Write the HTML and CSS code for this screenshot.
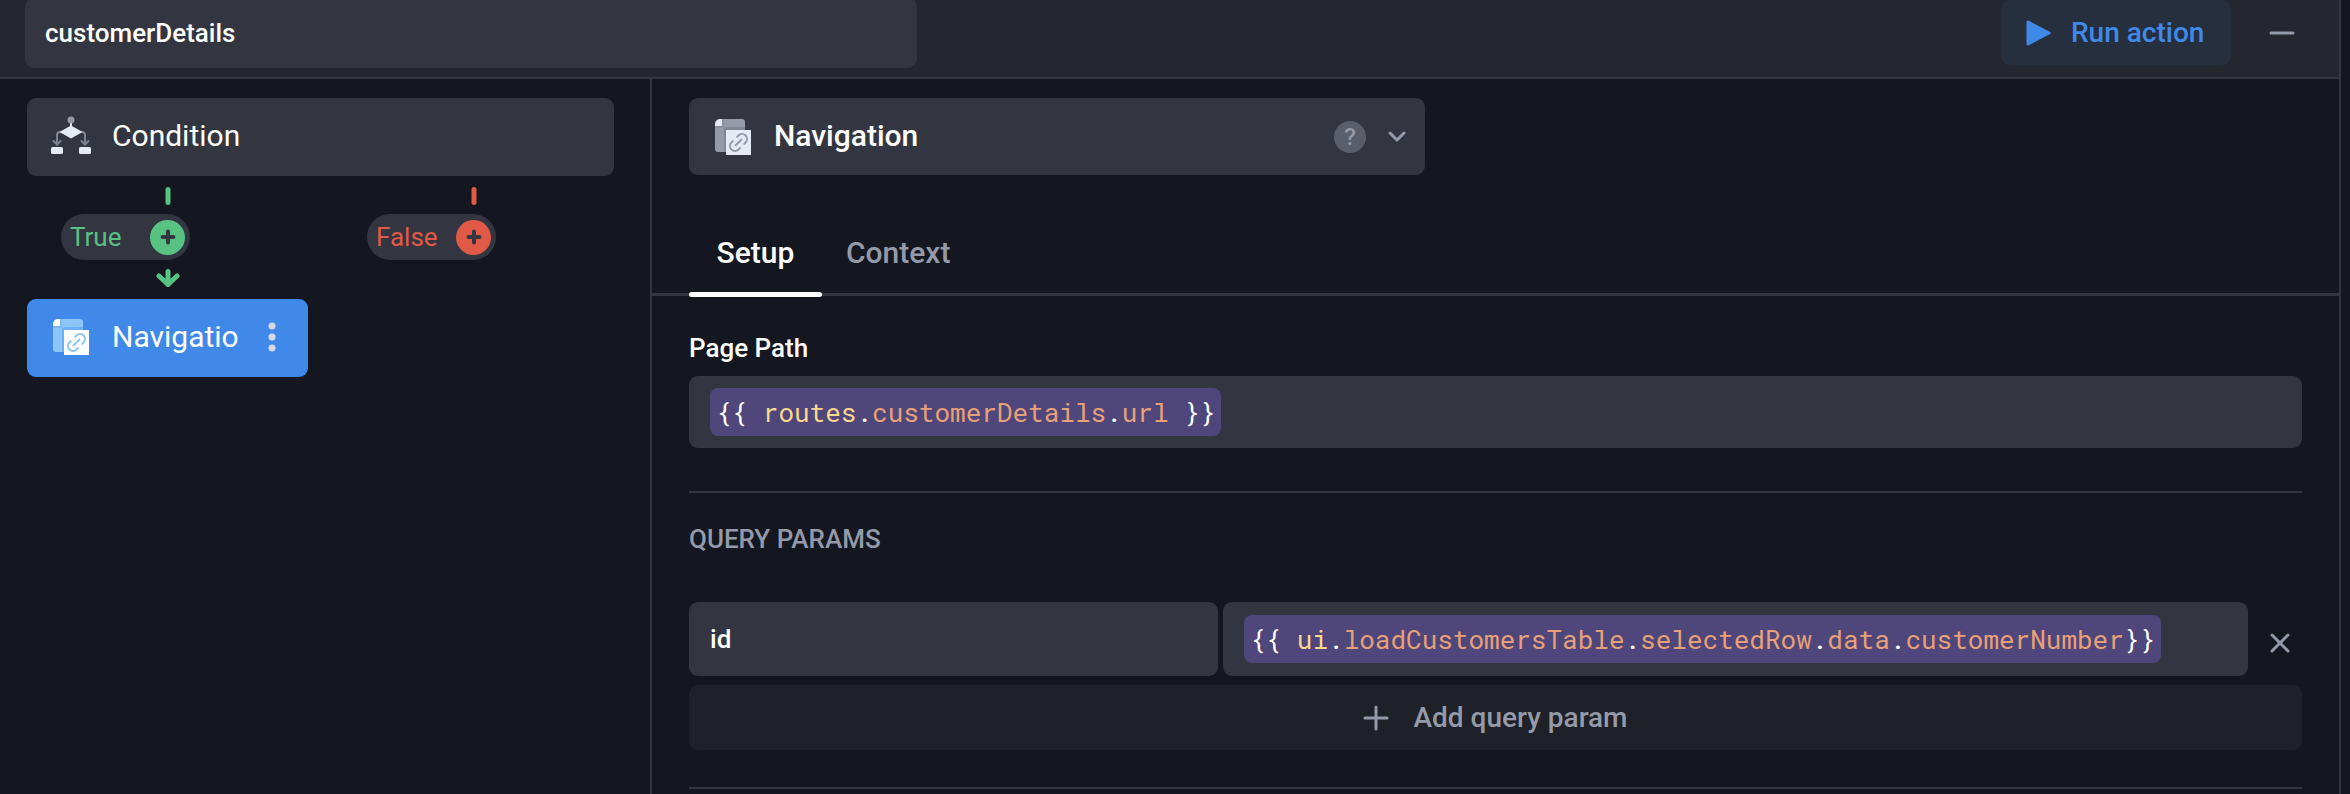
FILE: index.html
```html
<!DOCTYPE html>
<html lang="en">
<head>
<meta charset="utf-8">
<title>customerDetails</title>
<link rel="stylesheet" href="styles.css">
</head>
<body>
<svg class="sprite" aria-hidden="true">
  <symbol id="page-link" viewBox="0 0 36 36">
    <path class="sheet" d="M7 0H27a3 3 0 0 1 3 3V33H3a3 3 0 0 1-3-3V7z"/>
    <path class="shade" d="M0 7.500H7.500V0H8.500V8.500H0zM9 11a3 3 0 0 1 3-3H30V33H9z"/>
    <path class="paper" d="M0 7V5a5 5 0 0 1 5-5H7V7zM11 11H36V36H11z"/>
    <g class="chain" transform="translate(23.500 23.500) rotate(-45)">
      <path d="M-3 -5H-5a5 5 0 0 0 0 10H-3M3 -5H5a5 5 0 0 1 0 10H3M-4 0H4"/>
    </g>
  </symbol>
</svg>
<div class="editor">
  <header class="topbar">
    <input class="action-name" type="text" value="customerDetails" aria-label="Action name">
    <div class="topbar-actions">
      <button class="run" type="button">
        <svg width="25" height="26" viewBox="0 0 25 26" aria-hidden="true"><path d="M2 2V24L23 13z" fill="currentColor" stroke="currentColor" stroke-width="3" stroke-linejoin="round"/></svg>
        Run action
      </button>
      <button class="icon-button" type="button" aria-label="Minimize">
        <svg width="26" height="26" viewBox="0 0 26 26" aria-hidden="true"><path d="M2 13H24" stroke="currentColor" stroke-width="3" stroke-linecap="round"/></svg>
      </button>
    </div>
  </header>
  <div class="panes">
    <aside class="flow">
      <button class="step" type="button">
        <svg width="40" height="40" viewBox="0 0 40 40" aria-hidden="true">
          <path d="M20 5V12" stroke="#e6eaf4" stroke-width="2"/>
          <circle cx="20" cy="4" r="3.500" fill="#949aa9"/>
          <path d="M10 16H9a3 3 0 0 0-3 3V28M2.500 25L6 28.500L9.500 25M30 16H31a3 3 0 0 1 3 3V28M30.500 25L34 28.500L37.500 25" fill="none" stroke="#7d8290" stroke-width="2" stroke-linecap="round"/>
          <path d="M20 9.500L31.500 16L20 22.500L8.500 16z" fill="#e6eaf4"/>
          <rect x="0" y="31" width="12" height="7" rx="1.500" fill="#e6eaf4"/>
          <rect x="28" y="31" width="12" height="7" rx="1.500" fill="#e6eaf4"/>
        </svg>
        <span>Condition</span>
      </button>
      <div class="branches">
        <div class="branch branch-true">
          <svg class="stem" width="24" height="18" viewBox="0 0 24 18" aria-hidden="true"><path d="M12 2.500V15.500"/></svg>
          <div class="pill">
            <span>True</span>
            <button class="add-step" type="button" aria-label="Add step to true branch">
              <svg width="16" height="16" viewBox="0 0 16 16" aria-hidden="true"><path d="M8 2.500V13.500M2.500 8H13.500"/></svg>
            </button>
          </div>
          <svg class="stem" width="24" height="18" viewBox="0 0 24 18" aria-hidden="true"><path d="M12 2.500V15.500M3 7L12 15.500L21 7"/></svg>
          <div class="step step-active">
            <svg class="page-icon" width="36" height="36" aria-hidden="true"><use href="#page-link"/></svg>
            <span>Navigatio</span>
            <button class="step-menu" type="button" aria-label="Step menu">
              <svg width="8" height="30" viewBox="0 0 8 30" fill="#d5dae6" aria-hidden="true"><circle cx="4" cy="4" r="3.500"/><circle cx="4" cy="15" r="3.500"/><circle cx="4" cy="26" r="3.500"/></svg>
            </button>
          </div>
        </div>
        <div class="branch branch-false">
          <svg class="stem" width="24" height="18" viewBox="0 0 24 18" aria-hidden="true"><path d="M12 2.500V15.500"/></svg>
          <div class="pill">
            <span>False</span>
            <button class="add-step" type="button" aria-label="Add step to false branch">
              <svg width="16" height="16" viewBox="0 0 16 16" aria-hidden="true"><path d="M8 2.500V13.500M2.500 8H13.500"/></svg>
            </button>
          </div>
        </div>
      </div>
    </aside>
    <main class="settings">
      <div class="type-picker">
        <svg class="page-icon" width="36" height="36" aria-hidden="true"><use href="#page-link"/></svg>
        <select class="type-select" aria-label="Step type"><option>Navigation</option></select>
        <button class="help" type="button" aria-label="Help">?</button>
        <svg class="chevron" width="18" height="12" viewBox="0 0 18 12" aria-hidden="true"><path d="M2 2L9 9L16 2"/></svg>
      </div>
      <nav class="tabs" role="tablist">
        <button class="tab tab-active" type="button" role="tab" aria-selected="true">Setup</button>
        <button class="tab" type="button" role="tab" aria-selected="false">Context</button>
      </nav>
      <div class="form">
        <section class="group">
          <div class="label" id="path-label">Page Path</div>
          <div class="field" role="textbox" aria-labelledby="path-label"><code class="chip">{{ <b>routes</b>.<i>customerDetails</i>.<i>url</i> }}</code></div>
        </section>
        <section class="group params">
          <h2 class="heading">QUERY PARAMS</h2>
          <div class="param">
            <input class="field param-key" type="text" value="id" aria-label="Parameter name">
            <div class="field param-value" role="textbox" aria-label="Parameter value"><code class="chip">{{ <b>ui</b>.<i>loadCustomersTable</i>.<i>selectedRow</i>.<i>data</i>.<i>customerNumber</i>}}</code></div>
            <button class="icon-button remove" type="button" aria-label="Remove parameter">
              <svg width="20" height="20" viewBox="0 0 20 20" aria-hidden="true"><path d="M2 2L18 18M18 2L2 18" stroke="currentColor" stroke-width="3" stroke-linecap="round"/></svg>
            </button>
          </div>
          <button class="add-param" type="button">
            <svg width="26" height="26" viewBox="0 0 26 26" aria-hidden="true"><path d="M13 2V24M2 13H24" stroke="currentColor" stroke-width="3" stroke-linecap="round"/></svg>
            Add query param
          </button>
        </section>
      </div>
    </main>
  </div>
</div>
</body>
</html>
```
FILE: styles.css
```css
:root {
  --bg: #14171f;
  --bar: #24272f;
  --surface: #333640;
  --muted: #949aa9;
  --blue: #4089e9;
  --green: #58c283;
  --red: #e05a47;
}

* { box-sizing: border-box; }

body {
  margin: 0;
  background: var(--bg);
  color: #fff;
  font: 500 26px/32px Roboto, "Liberation Sans", sans-serif;
}

button, input, select {
  margin: 0;
  padding: 0;
  border: 0;
  background: none;
  color: inherit;
  font: inherit;
}

svg { display: block; flex: none; }

.sprite { position: absolute; width: 0; height: 0; }

.editor {
  display: flex;
  flex-direction: column;
  height: 100vh;
  margin-right: 9px;
  border-right: 2px solid var(--surface);
  overflow: hidden;
}

.topbar {
  display: flex;
  flex: none;
  align-items: center;
  justify-content: space-between;
  height: 79px;
  padding: 0 44px 12px 25px;
  border-bottom: 2px solid var(--surface);
  background: var(--bar);
}

.action-name {
  flex: 0 1 892px;
  min-width: 0;
  height: 70px;
  padding: 0 20px;
  border-radius: 9px;
  background: var(--surface);
}

.topbar-actions { display: flex; align-items: center; gap: 38px; }

.run {
  display: flex;
  align-items: center;
  gap: 20px;
  min-width: 230px;
  height: 65px;
  padding: 0 20px 0 25px;
  border-radius: 9px;
  background: #262f3d;
  color: var(--blue);
  font-size: 28px;
}

.icon-button { color: var(--muted); }

.panes { display: flex; flex: 1; min-height: 0; }

.flow {
  flex: 0 0 652px;
  padding: 19px 36px 0 27px;
  border-right: 2px solid var(--surface);
}

.step {
  display: flex;
  align-items: center;
  gap: 21px;
  width: 100%;
  height: 78px;
  padding: 0 24px 2px;
  border-radius: 9px;
  background: var(--surface);
  font-size: 30px;
  font-weight: 400;
}

.branches {
  display: grid;
  grid-template-columns: 1fr 1fr;
  gap: 25px;
  padding-top: 11px;
}

.branch {
  display: flex;
  flex-direction: column;
  align-items: center;
  gap: 9px;
  color: var(--green);
}

.branch-false { color: var(--red); }

.stem {
  fill: none;
  stroke: currentColor;
  stroke-width: 5;
  stroke-linecap: round;
  stroke-linejoin: round;
}

.pill {
  display: flex;
  align-items: center;
  justify-content: space-between;
  width: 129px;
  height: 46px;
  margin-right: 84px;
  padding: 0 5px 0 9px;
  border-radius: 23px;
  background: var(--surface);
  font-weight: 400;
}

.add-step {
  display: grid;
  place-items: center;
  width: 35px;
  height: 35px;
  border-radius: 50%;
  background: currentColor;
}

.add-step path {
  stroke: var(--surface);
  stroke-width: 4;
  stroke-linecap: round;
}

.step-active {
  gap: 23px;
  margin-top: 3px;
  padding: 0 32px 2px 26px;
  background: var(--blue);
  color: #fff;
}

.step-menu { margin-left: auto; }

.sheet { fill: var(--sheet, #949aa9); }
.shade { fill: var(--shade, #808694); }
.paper { fill: var(--paper, #e6eaf4); }
.chain { fill: none; stroke: var(--chain, #949aa9); stroke-width: 2; stroke-linecap: round; }

.step-active .page-icon {
  --sheet: #8bc6f7;
  --shade: #6eaef2;
  --paper: #fff;
  --chain: #8bc6f7;
}

.settings { flex: 1; min-width: 0; padding-top: 19px; }

.type-picker {
  display: flex;
  align-items: center;
  max-width: 736px;
  height: 77px;
  margin-left: 37px;
  padding: 0 19px 0 26px;
  border-radius: 9px;
  background: var(--surface);
}

.type-select {
  flex: 1;
  height: 100%;
  padding: 0 0 2px 23px;
  appearance: none;
  font-size: 30px;
}

.help {
  width: 32px;
  height: 32px;
  margin-right: 22px;
  border-radius: 50%;
  background: #5a5e6b;
  color: var(--muted);
  font-size: 24px;
}

.chevron {
  fill: none;
  stroke: var(--muted);
  stroke-width: 3;
  stroke-linecap: round;
  stroke-linejoin: round;
}

.tabs {
  display: flex;
  height: 121px;
  padding: 41px 37px 0;
  border-bottom: 3px solid var(--surface);
}

.tab {
  position: relative;
  min-width: 133px;
  padding: 0 24px 3px;
  color: var(--muted);
  font-size: 30px;
}

.tab-active { color: #fff; }

.tab-active::after {
  content: "";
  position: absolute;
  right: 0;
  bottom: -4px;
  left: 0;
  height: 5px;
  border-radius: 3px;
  background: #fff;
}

.form { padding: 36px 37px 0; }

.group { border-bottom: 2px solid var(--surface); padding-bottom: 43px; }

.label { padding-bottom: 12px; }

.field {
  display: flex;
  align-items: center;
  height: 72px;
  padding: 0 21px;
  border-radius: 9px;
  background: var(--surface);
}

.chip {
  padding: 8px 6px;
  border-radius: 8px;
  background: #4f467b;
  font: 400 26px/32px "Roboto Mono", "DejaVu Sans Mono", monospace;
  white-space: pre;
}

.chip b { color: #fbd78b; font-weight: 400; }
.chip i { color: #e8a077; font-style: normal; }

.heading {
  margin: 0;
  padding: 30px 0 47px;
  color: var(--muted);
  font-size: 26px;
  font-weight: 500;
}

.params { padding-bottom: 37px; }

.param {
  display: grid;
  grid-template-columns: 529fr 1025fr 49px;
  column-gap: 5px;
  padding-bottom: 9px;
}

.param .field { min-width: 0; height: 74px; }

.remove { display: grid; place-items: center; padding: 8px 0 0 4px; }

.add-param {
  display: flex;
  align-items: center;
  justify-content: center;
  gap: 24px;
  width: 100%;
  height: 65px;
  border-radius: 9px;
  background: #1e2128;
  color: var(--muted);
  font-size: 28px;
}
```
